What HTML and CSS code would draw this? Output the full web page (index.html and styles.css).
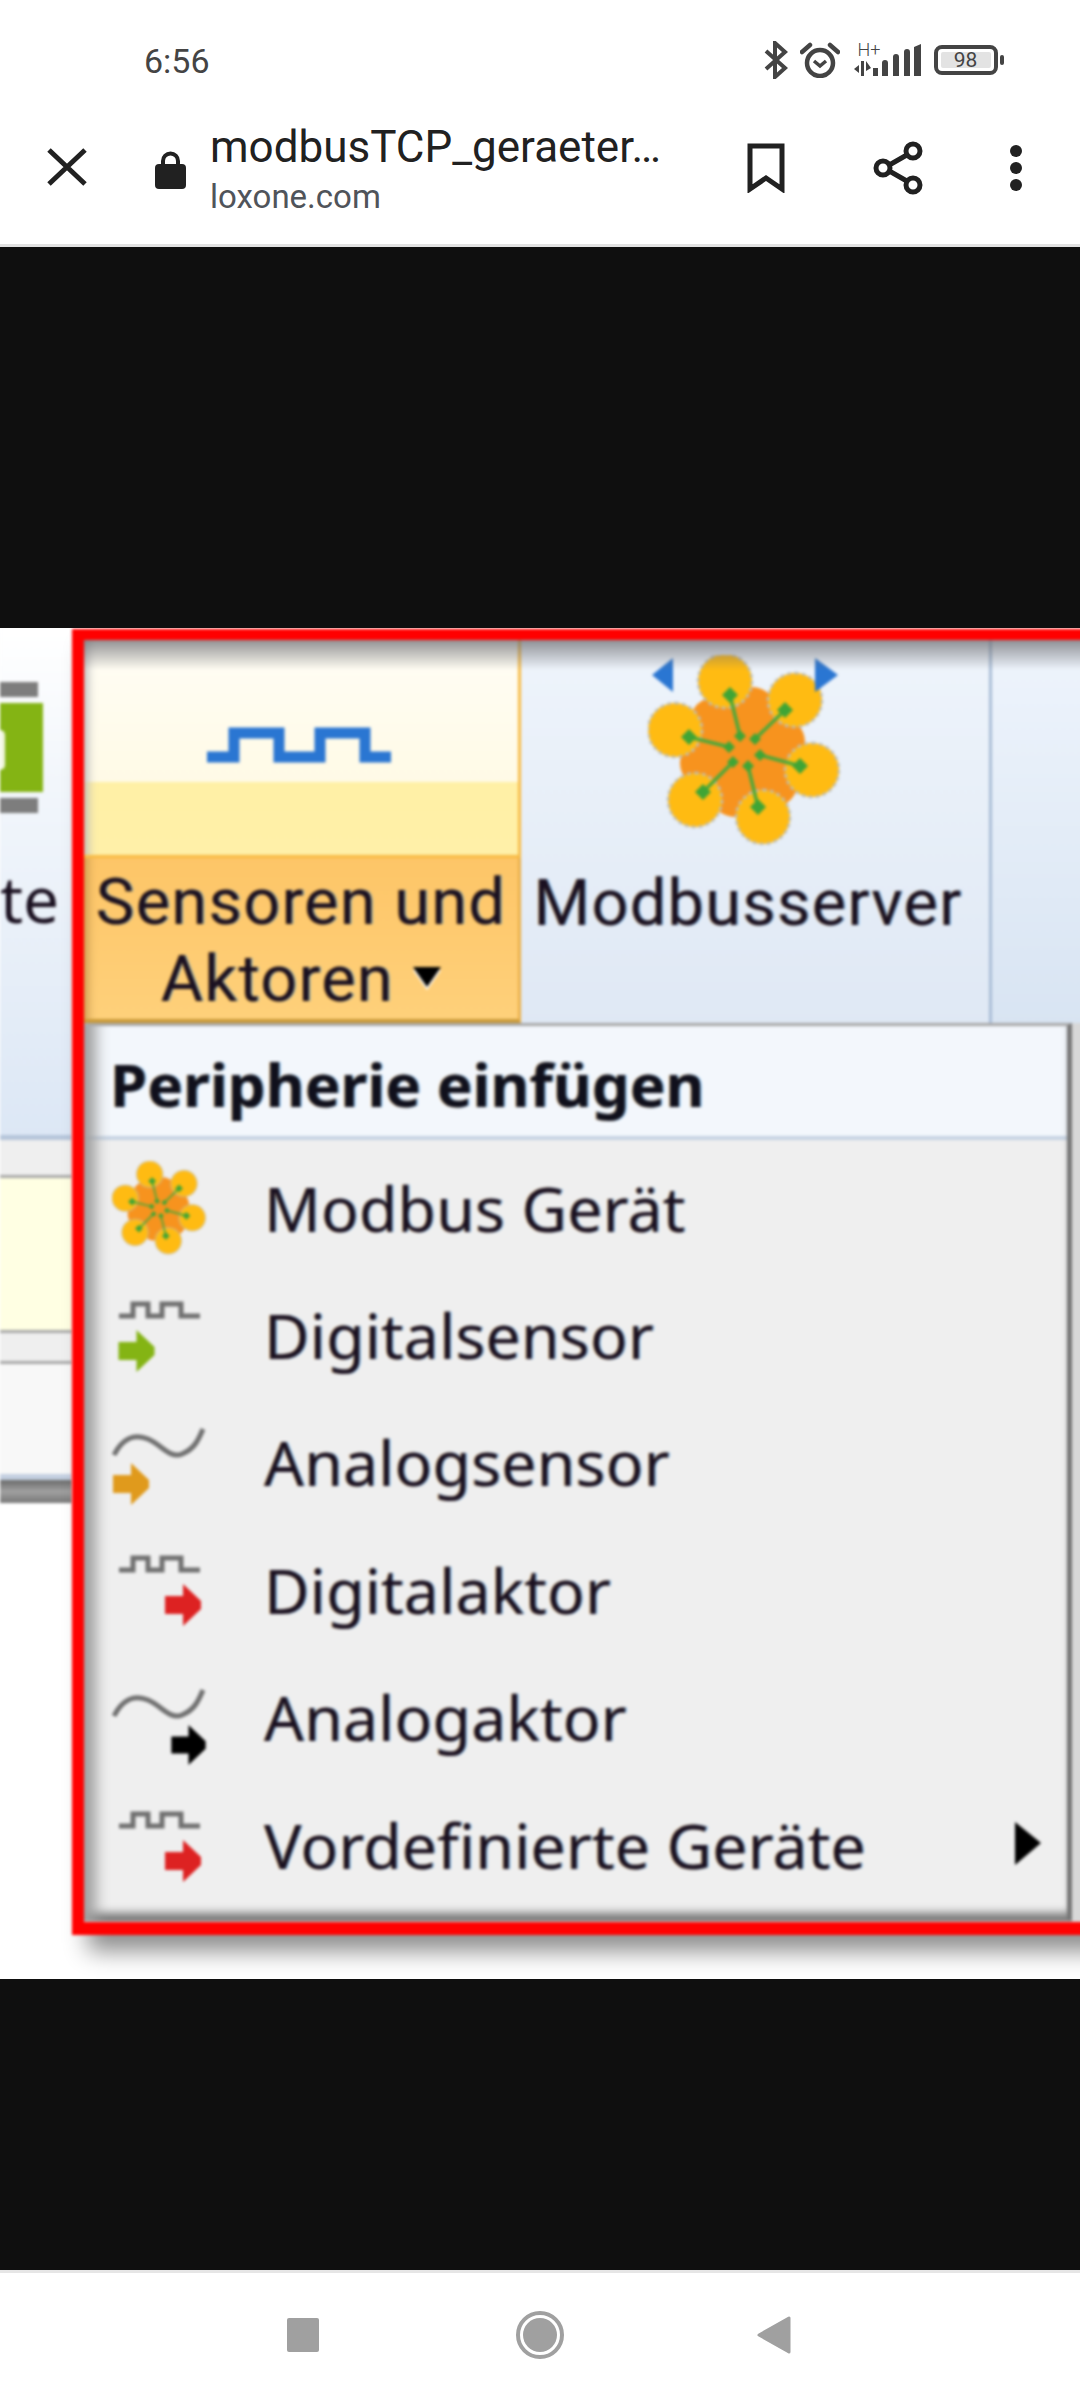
FILE: index.html
```html
<!DOCTYPE html>
<html lang="de">
<head>
<meta charset="utf-8">
<title>modbusTCP_geraeter</title>
<link rel="stylesheet" href="styles.css">
</head>
<body>
<svg class="defs" width="0" height="0" aria-hidden="true">
  <symbol id="arrow" viewBox="0 0 36 42"><path d="M0 12H18V0L36 17V25L18 42V30H0Z"/></symbol>
  <symbol id="flower" viewBox="648 655 192 190">
    <g fill="#f7931e">
      <circle cx="745" cy="750" r="34"/><circle cx="752" cy="712" r="25"/><circle cx="780" cy="742" r="25"/>
      <circle cx="773" cy="782" r="25"/><circle cx="735" cy="792" r="25"/><circle cx="705" cy="763" r="25"/><circle cx="715" cy="722" r="25"/>
    </g>
    <g fill="#ffbb12" stroke="#bdbdb6" stroke-width="2.500" stroke-dasharray="4 3">
      <path d="M725 654a27 27 0 1 1-.01 0ZM795 673a27 27 0 1 1-.01 0ZM812 743a27 27 0 1 1-.01 0ZM763 790a27 27 0 1 1-.01 0ZM695 773a27 27 0 1 1-.01 0ZM675 703a27 27 0 1 1-.01 0Z"/>
    </g>
    <path d="M730 695 740 736M785 710 755 739M800 766 760 755M758 807 748 766M703 792 733 762M689 737 729 747" stroke="#4aa83a" stroke-width="3.500"/>
    <g fill="#3fa535">
      <path d="M730 687l8 8-8 8-8-8zM785 702l8 8-8 8-8-8zM800 758l8 8-8 8-8-8zM758 799l8 8-8 8-8-8zM703 784l8 8-8 8-8-8zM689 729l8 8-8 8-8-8z"/>
      <path d="M740 730l6 6-6 6-6-6zM755 733l6 6-6 6-6-6zM760 749l6 6-6 6-6-6zM748 760l6 6-6 6-6-6zM733 756l6 6-6 6-6-6zM729 741l6 6-6 6-6-6z"/>
    </g>
  </symbol>
</svg>

<header class="chrome">
  <div class="status">
    <span class="time">6:56</span>
    <div class="status-icons">
      <svg class="ic-bt" width="24" height="38" viewBox="0 0 24 38"><path d="M2 10 21 27 11 36V2L21 11 2 28" fill="none" stroke="#444" stroke-width="4"/></svg>
      <svg class="ic-alarm" width="40" height="36" viewBox="0 0 40 36">
        <circle cx="20" cy="21" r="13" fill="none" stroke="#444" stroke-width="4.5"/>
        <path d="M14 19l6 5 6-5" fill="none" stroke="#444" stroke-width="3.5"/>
        <path d="M2 10 10 3M38 10 30 3" stroke="#444" stroke-width="4.5" stroke-linecap="round"/>
      </svg>
      <div class="signal">
        <span class="hplus">H+</span>
        <svg class="bars" width="68" height="32" viewBox="0 0 68 32">
          <path d="M0 25 5 21V29ZM7 17H10V32H7ZM12 17 17 24 12 27ZM19 24H24V32H19ZM28 19a3 3 0 0 1 6 0V32H28ZM39 13a3 3 0 0 1 6 0V32H39ZM50 8a3 3 0 0 1 6 0V32H50ZM60 3 67 0V32H60Z" fill="#444"/>
        </svg>
      </div>
      <div class="battery"><span class="battery-fill">98</span></div>
      <span class="battery-nub"></span>
    </div>
  </div>
  <div class="toolbar">
    <svg class="ic-close" width="40" height="38" viewBox="0 0 40 38"><path d="M2 2 38 36M38 2 2 36" stroke="#212121" stroke-width="5"/></svg>
    <svg class="ic-lock" width="31" height="38" viewBox="0 0 31 38"><path d="M8 15V10a7.500 7.500 0 0 1 15 0V15" fill="none" stroke="#212121" stroke-width="4"/><rect y="13" width="31" height="25" rx="4" fill="#212121"/></svg>
    <div class="page">
      <div class="page-title">modbusTCP_geraeter…</div>
      <div class="page-host">loxone.com</div>
    </div>
    <svg class="ic-bookmark" width="38" height="50" viewBox="0 0 38 50"><path d="M3 3H35V46L19 35 3 46Z" fill="none" stroke="#212121" stroke-width="5"/></svg>
    <svg class="ic-share" width="50" height="54" viewBox="0 0 50 54"><path d="M39 11 11 27 39 43" fill="none" stroke="#212121" stroke-width="5"/><g fill="#fff" stroke="#212121" stroke-width="5"><circle cx="40" cy="10" r="7"/><circle cx="10" cy="27" r="7"/><circle cx="40" cy="44" r="7"/></g></svg>
    <svg class="ic-dots" width="12" height="46" viewBox="0 0 12 46"><circle cx="6" cy="6" r="6"/><circle cx="6" cy="23" r="6"/><circle cx="6" cy="40" r="6"/></svg>
  </div>
</header>

<main class="viewer">
  <div class="shot">
    <div class="side">
      <div class="side-ribbon">
        <div class="lib-icon"><span class="lib-bar"></span><span class="lib-green"><span class="lib-glyph"></span></span><span class="lib-bar"></span></div>
        <span class="lib-label">te</span>
      </div>
      <div class="band band-blue"></div>
      <div class="band band-light"></div>
      <div class="band band-yellow"></div>
      <div class="band band-light2"></div>
      <div class="band band-white"></div>
      <div class="band band-scroll"></div>
    </div>

    <div class="frame">
      <div class="ribbon">
        <div class="split">
          <div class="split-top">
            <svg class="pulse" width="186" height="38" viewBox="0 0 186 38"><path d="M2 30H29V6H74V30H115V6H160V30H186" fill="none" stroke="#2a76d2" stroke-width="11"/></svg>
          </div>
          <div class="split-bottom">
            <div class="label">Sensoren und<br>Aktoren <span class="caret"></span></div>
          </div>
        </div>
        <div class="server">
          <svg class="server-icon" width="200" height="190" viewBox="645 655 200 190">
            <use href="#flower" x="648" y="655" width="192" height="190"/>
            <path d="M652 675 673 658V692Z M815 658 838 675 815 692Z" fill="#2a76d2"/>
          </svg>
          <div class="label label-server">Modbusserver</div>
        </div>
        <div class="ribbon-rest"></div>
      </div>

      <div class="menu">
        <div class="menu-head">Peripherie einfügen</div>
        <div class="menu-row">
          <svg class="row-icon" width="100" height="127" viewBox="0 0 100 127"><use href="#flower" x="2" y="17" width="94" height="94"/></svg>
          <span class="row-text">Modbus Gerät</span>
        </div>
        <div class="menu-row">
          <svg class="row-icon" width="100" height="127" viewBox="0 0 100 127">
            <path class="sig" d="M9 44H23V32H38V44H52V32H71V44H90"/>
            <use href="#arrow" x="8" y="58" width="37" height="42" fill="#84b414"/>
          </svg>
          <span class="row-text">Digitalsensor</span>
        </div>
        <div class="menu-row">
          <svg class="row-icon" width="100" height="127" viewBox="0 0 100 127">
            <path class="sig" d="M4 56C12 40 24 34 38 40S60 60 72 55 88 42 93 30"/>
            <use href="#arrow" x="3" y="64" width="36" height="42" fill="#e09a1c"/>
          </svg>
          <span class="row-text">Analogsensor</span>
        </div>
        <div class="menu-row">
          <svg class="row-icon" width="100" height="127" viewBox="0 0 100 127">
            <path class="sig" d="M9 44H23V32H38V44H52V32H71V44H90"/>
            <use href="#arrow" x="55" y="58" width="36" height="42" fill="#dd2222"/>
          </svg>
          <span class="row-text">Digitalaktor</span>
        </div>
        <div class="menu-row">
          <svg class="row-icon" width="100" height="127" viewBox="0 0 100 127">
            <path class="sig" d="M4 62C12 46 24 40 38 46S60 66 72 61 88 48 93 36"/>
            <use href="#arrow" x="60" y="71" width="37" height="40" fill="#000"/>
          </svg>
          <span class="row-text">Analogaktor</span>
        </div>
        <div class="menu-row">
          <svg class="row-icon" width="100" height="127" viewBox="0 0 100 127">
            <path class="sig" d="M9 45H23V33H38V45H52V33H71V45H90"/>
            <use href="#arrow" x="55" y="59" width="36" height="42" fill="#dd2222"/>
          </svg>
          <span class="row-text">Vordefinierte Geräte</span>
          <svg class="submenu" width="26" height="43" viewBox="0 0 26 43"><path d="M0 0 26 21 0 43Z"/></svg>
        </div>
      </div>
    </div>
  </div>
</main>

<footer class="nav">
  <span class="nav-square"></span>
  <span class="nav-home"><span class="nav-home-dot"></span></span>
  <svg class="nav-back" width="34" height="38" viewBox="0 0 34 38"><path d="M32 2V36L2 19Z" fill="#a0a0a0" stroke="#a0a0a0" stroke-width="3" stroke-linejoin="round"/></svg>
</footer>
</body>
</html>
```

FILE: styles.css
```css
* { box-sizing: border-box; }
html, body { margin: 0; padding: 0; }
body {
  width: 1080px;
  height: 2400px;
  display: flex;
  flex-direction: column;
  overflow: hidden;
  background: #fff;
  font-family: Roboto, "Noto Sans", sans-serif;
}
.defs { position: absolute; }

/* Phone + browser chrome */
.chrome { height: 247px; flex: none; background: #fff; border-bottom: 3px solid #e2e2e2; }
.status { height: 84px; display: flex; padding: 0 0 0 144px; position: relative; }
.time { font-size: 34px; line-height: 38px; color: #444; margin-top: 42px; }
.status-icons { display: flex; align-items: flex-start; margin-left: 554px; }
.ic-bt { margin-top: 41px; }
.ic-alarm { margin: 42px 0 0 12px; }
.signal { width: 68px; margin: 42px 0 0 14px; position: relative; height: 34px; }
.hplus { position: absolute; left: 4px; top: 0; font-size: 18px; line-height: 16px; color: #444; font-weight: 300; }
.bars { position: absolute; left: 0; top: 2px; }
.battery { margin: 45px 0 0 12px; width: 64px; height: 30px; border: 4px solid #444; border-radius: 8px; padding: 3px; display: flex; }
.battery-fill { flex: 1; background: #e3e3e3; border-radius: 2px; font-size: 21px; line-height: 17px; color: #444; text-align: center; }
.battery-nub { width: 4px; height: 10px; margin: 55px 0 0 2px; background: #444; border-radius: 2px; }

.toolbar { height: 160px; display: flex; align-items: center; padding-left: 47px; padding-top: 5px; }
.ic-lock { margin-left: 68px; margin-top: 6px; }
.page { margin-left: 24px; width: 537px; margin-top: 11px; }
.page-title { font-size: 44px; line-height: 50px; color: #212121; white-space: nowrap; }
.page-host { font-size: 33px; line-height: 50px; color: #50545a; }
.ic-bookmark { margin-top: 2px; }
.ic-share { margin-left: 88px; margin-top: 2px; }
.ic-dots { margin-left: 87px; margin-top: 2px; fill: #212121; }

/* Black document viewer */
.viewer { height: 2023px; flex: none; background: #0f0f0f; padding-top: 381px; }
.shot { height: 1351px; background: #fff; display: flex; overflow: hidden; }

/* Part of the screenshot left of the red frame */
.side { width: 72px; flex: none; display: flex; flex-direction: column; filter: blur(1.4px); }
.side-ribbon { height: 507px; padding-top: 54px; background: linear-gradient(#fff, #f2f6fb 30%, #dce7f5); display: flex; flex-direction: column; }
.lib-icon { display: flex; flex-direction: column; gap: 6px; width: 43px; }
.lib-bar { height: 15px; width: 38px; background: #7d7d7d; }
.lib-green { height: 89px; background: #84b414; display: block; padding-top: 27px; }
.lib-glyph { display: block; width: 5px; height: 40px; background: #f2f7e2; border-radius: 0 8px 8px 0; }
.lib-label { font-family: "Noto Sans", sans-serif; font-size: 64px; line-height: 60px; margin-top: 56px; text-align: right; padding-right: 20px; color: #1a1020; }
.band { flex: none; }
.band-blue { height: 5px; background: #b5c5da; }
.band-light { height: 38px; background: #efefef; border-bottom: 3px solid #a8a8a8; }
.band-yellow { height: 155px; background: #ffffe3; border-bottom: 3px solid #a8a8a8; }
.band-light2 { height: 31px; background: #efefef; border-bottom: 3px solid #a8a8a8; }
.band-white { height: 116px; background: #f8f8f8; border-bottom: 6px solid #c3cfe0; }
.band-scroll { height: 23px; background: linear-gradient(#6a6a6a, #a0a0a0 50%, #777); }

/* Red annotation frame */
.frame {
  flex: none;
  width: 1020px;
  height: 1306px;
  margin-top: 1px;
  border: solid #f00;
  border-width: 11px 0 13px 12px;
  background: #d8d8d8;
  box-shadow: 16px 16px 22px rgba(0, 0, 0, .45);
  display: flex;
  flex-direction: column;
  filter: blur(1.4px);
}

/* Ribbon */
.ribbon { height: 383px; flex: none; display: flex; position: relative; background: linear-gradient(#eef4fb, #dfe8f4); }
.ribbon::after { content: ""; position: absolute; left: 0; right: 0; top: 0; height: 30px; background: linear-gradient(rgba(110, 110, 115, .75), rgba(140, 140, 145, 0)); }
.split { width: 437px; flex: none; display: flex; flex-direction: column; }
.split-top { height: 218px; background: linear-gradient(#fffdf5, #fffae6 66%, #fff0a5 66%, #fff0a8); border: solid #f8bb44; border-width: 0 3px 3px 0; padding: 87px 0 0 121px; box-shadow: inset 12px 0 10px -8px #bbb; }
.split-bottom { flex: 1; padding-top: 6px; background: linear-gradient(#fdc567, #fed07a); border-right: 3px solid #eab04a; border-bottom: 4px solid #c99a3a; box-shadow: inset 14px 0 10px -10px #c99a50; text-align: center; }
.pulse { display: block; }
.label { font-family: Roboto, "Noto Sans", sans-serif; font-size: 65px; line-height: 77px; letter-spacing: 1.2px; color: #1a1020; white-space: nowrap; text-shadow: -1px 0 rgba(255, 170, 40, .5), 1.500px 0 rgba(0, 140, 255, .4); }
.caret { display: inline-block; width: 0; height: 0; margin-left: 2px; vertical-align: 14px; border: solid transparent; border-width: 20px 14px 0; border-top-color: #000; filter: drop-shadow(0 3px 0 #fff); }
.server { width: 471px; flex: none; border-right: 3px solid #a9bdd6; display: flex; flex-direction: column; align-items: center; padding-top: 15px; }
.server-icon { display: block; margin-left: -20px; }
.label-server { margin-top: 20px; margin-left: -14px; }
.ribbon-rest { flex: 1; background: linear-gradient(#eef4fc, #d8e4f2); }

/* Drop-down menu */
.menu { width: 988px; height: 898px; flex: none; position: relative; background: #efefef; border-top: 3px solid #a8a8a8; border-right: 5px solid #777; }
.menu::after { content: ""; position: absolute; inset: 0; box-shadow: inset 24px 0 14px -12px #a0a0a0, inset 0 -12px 8px -4px #777; }
.menu-head { height: 114px; margin-bottom: 4px; background: #f3f7fc; border-bottom: 4px solid #c6d3e3; padding: 8px 0 0 26px; font-family: "Noto Sans", sans-serif; font-weight: 700; font-size: 60px; line-height: 100px; color: #10101c; text-shadow: -1px 0 rgba(255, 170, 40, .5), 1.500px 0 rgba(0, 140, 255, .4); }
.menu-row { height: 127.4px; display: flex; align-items: center; padding-left: 26px; position: relative; }
.row-icon { flex: none; }
.row-text { margin-left: 54px; font-family: "Noto Sans", sans-serif; font-size: 62.5px; line-height: 70px; letter-spacing: 0.2px; color: #1a1020; white-space: nowrap; text-shadow: -1px 0 rgba(255, 170, 40, .5), 1.500px 0 rgba(0, 140, 255, .4); }
.sig { fill: none; stroke: #707070; stroke-width: 5px; }
.submenu { position: absolute; right: 26px; top: 41px; }

/* Android navigation bar */
.nav { flex: 1; background: #fff; border-top: 3px solid #e6e6e6; display: flex; align-items: center; padding: 0 0 4px 287px; }
.nav-square { width: 32px; height: 34px; background: #a0a0a0; border-radius: 2px; }
.nav-home { width: 48px; height: 48px; margin-left: 197px; border-radius: 50%; border: 4px solid #a0a0a0; display: flex; align-items: center; justify-content: center; }
.nav-home-dot { width: 34px; height: 34px; border-radius: 50%; background: #a0a0a0; }
.nav-back { margin-left: 193px; }
```
